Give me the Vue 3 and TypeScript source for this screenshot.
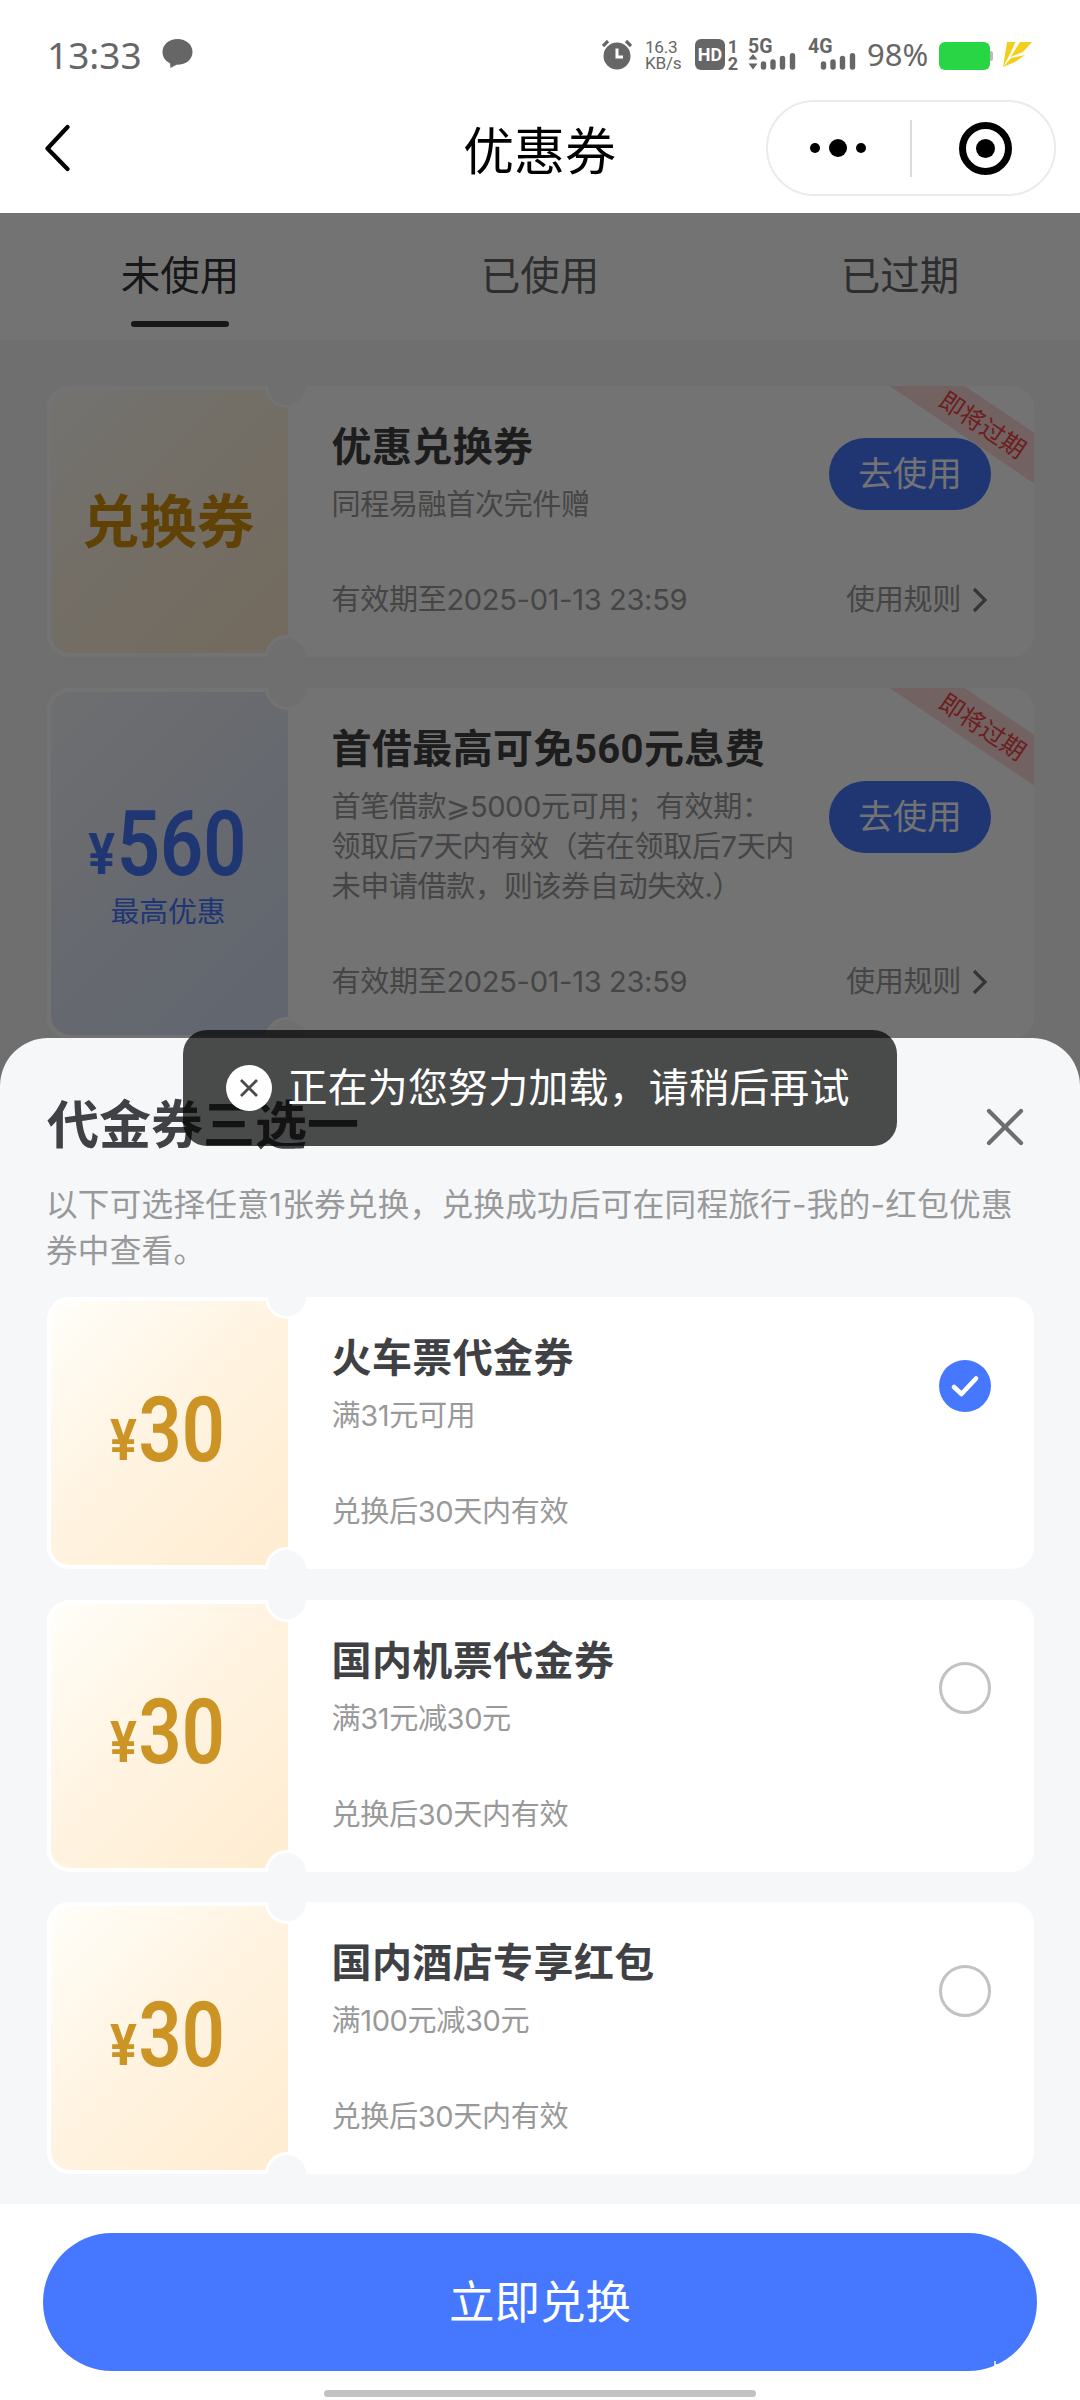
<script setup lang="ts">
interface Coupon {
  tone: 'gold' | 'blue'
  height: number
  word?: string
  amount?: string
  caption?: string
  title: string
  lines: string[]
  buttonTop: number
}

interface Voucher {
  title: string
  rule: string
  picked: boolean
}

const tabs: string[] = ['未使用', '已使用', '已过期']

const coupons: Coupon[] = [
  {
    tone: 'gold',
    height: 271,
    word: '兑换券',
    title: '优惠兑换券',
    lines: ['同程易融首次完件赠'],
    buttonTop: 52,
  },
  {
    tone: 'blue',
    height: 351,
    amount: '560',
    caption: '最高优惠',
    title: '首借最高可免560元息费',
    lines: ['首笔借款⩾5000元可用；有效期：', '领取后7天内有效（若在领取后7天内', '未申请借款，则该券自动失效.）'],
    buttonTop: 93,
  },
]

const vouchers: Voucher[] = [
  { title: '火车票代金券', rule: '满31元可用', picked: true },
  { title: '国内机票代金券', rule: '满31元减30元', picked: false },
  { title: '国内酒店专享红包', rule: '满100元减30元', picked: false },
]
</script>

<template>
  <div class="page">
    <div class="status">
      <span class="time">13:33</span>
      <svg class="bubble" width="31" height="31" viewBox="0 0 31 31">
        <path d="M15.5 1C7 1 .5 6.600.5 14c0 5 2.800 9 7.500 11.200L8.500 30l6-3.200C24 27 30.500 21.500 30.500 14S24 1 15.500 1Z" fill="#666" />
      </svg>
      <div class="indicators">
        <svg class="alarm" width="30" height="31" viewBox="0 0 30 31">
          <circle cx="15" cy="17" r="13.5" fill="#666" />
          <path d="M1 7 6 2M29 7 24 2" stroke="#666" stroke-width="3.2" />
          <path d="M15 9.500V18H21" stroke="#fff" stroke-width="3" fill="none" />
        </svg>
        <div class="speed"><span>16.3</span><span>KB/s</span></div>
        <div class="hd">HD</div>
        <div class="sims"><span>1</span><span>2</span></div>
        <div class="net net5">
          <span>5G</span>
          <svg width="48" height="17" viewBox="0 0 48 17">
            <path d="M.5 6.500 5 1l4.500 5.500ZM.5 10.500l4.500 6 4.500-6Z" fill="#666" />
            <path d="M15.500 14V11M25 14V9M34.500 14V5.500M44.500 14V2.800" stroke="#666" stroke-width="5.400" stroke-linecap="round" />
          </svg>
        </div>
        <div class="net net4">
          <span>4G</span>
          <svg width="48" height="17" viewBox="0 0 48 17">
            <path d="M15.500 14V11M25 14V9M34.500 14V5.500M44.500 14V2.800" stroke="#666" stroke-width="5.400" stroke-linecap="round" />
          </svg>
        </div>
        <span class="percent">98%</span>
        <svg class="battery" width="55" height="28" viewBox="0 0 55 28">
          <rect x="49" y="9" width="5" height="10" rx="2" fill="#bbb" />
          <rect x="0" y="0" width="51" height="28" rx="6" fill="#28d645" />
        </svg>
        <svg class="bolt" width="30" height="26" viewBox="0 0 30 26">
          <path d="M5 0H13.500L9 10 7 14 1 25ZM18 0H30L21 10 8.500 15ZM9 16 23 13 13 20 1 25Z" fill="#f2cf1d" />
        </svg>
      </div>
    </div>

    <header class="nav">
      <svg class="back" width="26" height="48" viewBox="0 0 26 48">
        <path d="M22.500 3 2.500 24.500 22.500 45" fill="none" stroke="#000" stroke-width="4.200" stroke-linecap="round" stroke-linejoin="round" />
      </svg>
      <h1>优惠券</h1>
      <div class="capsule">
        <svg width="286" height="92" viewBox="0 0 286 92">
          <circle cx="47" cy="46" r="5" />
          <circle cx="70" cy="46" r="9" />
          <circle cx="93" cy="46" r="5" />
          <path d="M143 18V75" stroke="#dcdcdc" stroke-width="2" />
          <circle cx="217.500" cy="46.500" r="23" fill="none" stroke="#000" stroke-width="7" />
          <circle cx="217.500" cy="46.500" r="9.500" />
        </svg>
      </div>
    </header>

    <main class="body">
      <nav class="tabs">
        <div v-for="(tab, i) in tabs" :key="tab" class="tab" :class="{ active: i === 0 }">{{ tab }}</div>
      </nav>
      <div class="list">
        <section v-for="c in coupons" :key="c.title" class="card" :style="{ height: c.height + 'px' }">
          <div class="face" :class="c.tone">
            <div v-if="c.word" class="word">{{ c.word }}</div>
            <div v-if="c.amount" class="amount"><i>¥</i><b>{{ c.amount }}</b></div>
            <div v-if="c.caption" class="caption">{{ c.caption }}</div>
          </div>
          <div class="info">
            <h2>{{ c.title }}</h2>
            <p v-for="line in c.lines" :key="line">{{ line }}</p>
            <div class="foot">
              <span>有效期至2025-01-13 23:59</span>
              <span class="rules">使用规则
                <svg width="16" height="26" viewBox="0 0 16 26"><path d="M2 2 13 13 2 24" fill="none" stroke="#777" stroke-width="3.200" /></svg>
              </span>
            </div>
          </div>
          <div class="corner">即将过期</div>
          <button class="use" :style="{ top: c.buttonTop + 'px' }">去使用</button>
          <span class="notch top"></span><span class="notch bottom"></span>
        </section>
      </div>
    </main>

    <div class="mask"></div>

    <div class="sheet">
      <div class="head">
        <h3>代金券三选一</h3>
        <svg width="38" height="38" viewBox="0 0 38 38">
          <path d="M3 3 35 35M35 3 3 35" stroke="#6c6e70" stroke-width="4.200" stroke-linecap="round" />
        </svg>
      </div>
      <div class="desc">
        <div>以下可选择任意1张券兑换，兑换成功后可在同程旅行-我的-红包优惠</div>
        <div>券中查看。</div>
      </div>
      <div class="vouchers">
        <section v-for="v in vouchers" :key="v.title" class="card">
          <div class="face gold"><div class="amount"><i>¥</i><b>30</b></div></div>
          <div class="info">
            <h2>{{ v.title }}</h2>
            <p>{{ v.rule }}</p>
            <div class="foot"><span>兑换后30天内有效</span></div>
          </div>
          <span class="radio" :class="{ picked: v.picked }">
            <svg v-if="v.picked" width="52" height="52" viewBox="0 0 52 52">
              <path d="M15 27 22.500 34 37 18.500" fill="none" stroke="#fff" stroke-width="4.600" stroke-linecap="round" stroke-linejoin="round" />
            </svg>
          </span>
          <span class="notch top"></span><span class="notch bottom"></span>
        </section>
      </div>
      <div class="action">
        <button class="redeem">
          立即兑换
          <svg class="speck" width="10" height="8" viewBox="0 0 10 8"><path d="M1 0V8M1 4H7" stroke="#fff" stroke-width="1.500" /></svg>
        </button>
        <div class="home"></div>
      </div>
    </div>

    <div class="toast">
      <svg width="46" height="46" viewBox="0 0 46 46">
        <circle cx="23" cy="23" r="23" fill="#fff" />
        <path d="M15 15 31 31M31 15 15 31" stroke="#4a4b4a" stroke-width="2.800" />
      </svg>
      <span>正在为您努力加载，请稍后再试</span>
    </div>
  </div>
</template>

<style>
body {
  margin: 0;
}
</style>

<style scoped>
* {
  box-sizing: border-box;
}
.page {
  position: relative;
  width: 1080px;
  height: 2400px;
  overflow: hidden;
  background: #fff;
  font-family: Inter, 'Noto Sans CJK SC', sans-serif;
  font-weight: 400;
  white-space: nowrap;
}
h1, h2, h3, p {
  margin: 0;
}
button {
  border: 0;
  padding: 0;
  font-family: inherit;
}
.status {
  display: flex;
  height: 100px;
  padding: 38px 0 0 47px;
  color: #666;
}
.time {
  width: 115px;
  font: 37px/34px 'Noto Sans', sans-serif;
}
.indicators {
  display: flex;
  margin-left: 409px;
}
.alarm {
  margin-top: 1px;
}
.speed {
  display: flex;
  flex-direction: column;
  width: 36px;
  margin: 1px 0 0 13px;
  font: 17.200px/16px Roboto, sans-serif;
  letter-spacing: -0.3px;
}
.hd {
  width: 30px;
  height: 31px;
  margin: 1px 0 0 14px;
  border-radius: 6px;
  background: #666;
  color: #fff;
  font: 700 18px/31px Roboto, sans-serif;
  text-align: center;
}
.sims {
  display: flex;
  flex-direction: column;
  width: 12px;
  margin: 0 0 0 2px;
  font: 700 18px/17px Roboto, sans-serif;
  text-align: center;
}
.net {
  display: flex;
  flex-direction: column;
  width: 48px;
  height: 34px;
  font: 700 19.500px/18px Roboto, sans-serif;
}
.net span {
  height: 16px;
}
.net svg {
  margin-top: -1px;
}
.net5 {
  margin-left: 9px;
}
.net4 {
  margin-left: 12px;
}
.percent {
  width: 64px;
  margin-left: 11px;
  font: 31px/33px 'Noto Sans', sans-serif;
  letter-spacing: 0;
}
.battery {
  margin: 4px 0 0 8px;
}
.bolt {
  margin: 4px 0 0 8px;
}
.nav {
  display: flex;
  align-items: center;
  height: 113px;
  padding: 0 24px 17px 45px;
}
.nav h1 {
  flex: 1;
  padding: 8px 0 0 392px;
  font-size: 51px;
  font-weight: 400;
  line-height: 60px;
  color: #000;
}
.capsule {
  width: 290px;
  height: 96px;
  border: 2px solid #ebebeb;
  border-radius: 48px;
}
.capsule svg {
  display: block;
}
.body {
  height: 2187px;
  background: #f5f6f8;
}
.tabs {
  display: flex;
  height: 127px;
  background: #fff;
}
.tab {
  display: flex;
  flex: 1;
  flex-direction: column;
  align-items: center;
  padding-top: 33px;
  font-size: 39.500px;
  line-height: 60px;
  color: #666;
}
.tab.active {
  color: #333;
}
.tab.active::after {
  content: '';
  width: 98px;
  height: 6px;
  margin-top: 15px;
  border-radius: 3px;
  background: #333;
}
.list {
  display: flex;
  flex-direction: column;
  gap: 31px;
  padding: 46px 46px 0 47px;
}
.card {
  position: relative;
  display: flex;
  overflow: hidden;
  height: 272px;
  padding: 4px;
  border-radius: 22px;
  background: #fff;
}
.face {
  display: flex;
  flex-direction: column;
  align-items: center;
  justify-content: center;
  width: 237px;
  border-radius: 19px 0 0 19px;
}
.face.gold {
  background: linear-gradient(135deg, #fffef9, #fff3e0 50%, #ffecd0);
  color: #cc9425;
}
.list .gold {
  color: #d8920f;
}
.face.blue {
  padding-top: 10px;
  background: linear-gradient(135deg, #f2f5fa, #e3e9f5 50%, #d6e2f5);
  color: #4678ff;
}
.word {
  padding-right: 3px;
  font-size: 57.500px;
  font-weight: 700;
  line-height: 60px;
}
.amount {
  display: flex;
  align-items: baseline;
  height: 66px;
  margin: -7px 3px 0 0;
  line-height: 66px;
  font-family: Roboto, sans-serif;
  transform: scaleX(0.83);
}
.amount i {
  margin-right: 3px;
  font-size: 57px;
  font-style: normal;
  font-weight: 700;
  transform: translateY(-1px) scaleX(1.06);
}
.amount b {
  font-size: 91px;
  font-weight: 600;
}
.blue .amount {
  margin-top: 5px;
}
.caption {
  margin: 15px 3px 0 0;
  font-size: 28.800px;
  line-height: 40px;
}
.info {
  display: flex;
  flex: 1;
  flex-direction: column;
  padding: 34px 42px 0 43.500px;
}
.info h2 {
  height: 61px;
  font-family: Roboto, 'Noto Sans CJK SC', sans-serif;
  font-size: 40px;
  font-weight: 700;
  line-height: 48px;
  letter-spacing: 0.4px;
  color: #404144;
}
.info p {
  font-size: 29.100px;
  line-height: 40px;
  letter-spacing: -0.4px;
  color: #999;
}
.foot {
  display: flex;
  justify-content: space-between;
  margin: auto 0 33px;
  font-size: 29.100px;
  line-height: 40px;
  letter-spacing: -0.35px;
  color: #999;
}
.rules {
  display: flex;
  align-items: center;
  gap: 11px;
}
.corner {
  position: absolute;
  top: 16px;
  right: -58px;
  width: 220px;
  height: 42px;
  padding-left: 3px;
  background: #ffd9d9;
  color: #f04545;
  font-size: 24.500px;
  line-height: 44px;
  text-align: center;
  transform: rotate(34deg);
}
.use {
  position: absolute;
  right: 43px;
  width: 162px;
  height: 72px;
  border-radius: 36px;
  background: #4678ff;
  color: #fff;
  font-size: 34.500px;
  line-height: 72px;
}
.notch {
  position: absolute;
  left: 218px;
  width: 44px;
  height: 44px;
  border: 3px solid #fff;
  border-radius: 50%;
  background: #f5f6f8;
}
.notch.top {
  top: -22px;
}
.notch.bottom {
  bottom: -22px;
}
.mask {
  position: absolute;
  inset: 213px 0 0;
  background: rgba(0, 0, 0, 0.55);
}
.sheet {
  position: absolute;
  inset: 1038px 0 0;
  display: flex;
  flex-direction: column;
  border-radius: 48px 48px 0 0;
  background: #f5f7f9;
}
.sheet .notch {
  background: #f5f7f9;
}
.head {
  display: flex;
  align-items: center;
  justify-content: space-between;
  height: 136px;
  padding: 42px 56px 0 47px;
}
.head h3 {
  margin-top: -3px;
  font-size: 52px;
  font-weight: 700;
  line-height: 60px;
  color: #404144;
}
.desc {
  height: 123px;
  padding: 8px 0 0 46px;
  font-size: 31.600px;
  line-height: 46px;
  letter-spacing: 0.27px;
  color: #999;
}
.vouchers {
  display: flex;
  flex-direction: column;
  gap: 30.500px;
  padding: 0 46px 0 47px;
}
.radio {
  position: absolute;
  top: 62.500px;
  right: 43px;
  width: 52px;
  height: 52px;
  border: 3px solid #c2c2c2;
  border-radius: 50%;
}
.radio.picked {
  border: 0;
  background: #4678ff;
}
.action {
  display: flex;
  flex-direction: column;
  align-items: center;
  height: 196px;
  margin-top: auto;
  padding-top: 29px;
  background: #fff;
}
.redeem {
  position: relative;
  width: 994px;
  height: 138px;
  border-radius: 69px;
  background: #4678ff;
  color: #fff;
  font-size: 45.500px;
  line-height: 140px;
}
.speck {
  position: absolute;
  right: 33px;
  bottom: 2px;
}
.home {
  width: 432px;
  height: 7px;
  margin-top: 19px;
  border-radius: 4px;
  background: #c2c2c2;
}
.toast {
  position: absolute;
  top: 1030px;
  left: 183px;
  display: flex;
  align-items: center;
  width: 714px;
  height: 116px;
  padding-left: 43px;
  border-radius: 24px;
  background: rgba(0, 0, 0, 0.7);
  color: #fff;
  font-size: 40px;
  letter-spacing: 0.15px;
}
.toast span {
  margin-left: 15.500px;
  line-height: 60px;
}
</style>
